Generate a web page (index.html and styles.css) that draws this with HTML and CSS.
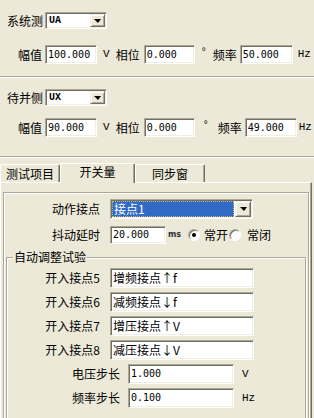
FILE: index.html
```html
<!DOCTYPE html>
<html lang="zh">
<head>
<meta charset="utf-8">
<title>同期</title>
<link rel="stylesheet" href="styles.css">
</head>
<body>
<div class="side side-sys">
  <div class="combo-row">
    <span class="side-label">系统测</span>
    <div class="combo combo-side"><span class="combo-val">UA</span><span class="drop"><i class="tri"></i></span></div>
  </div>
  <div class="val-row">
    <span class="lbl">幅值</span>
    <span class="field f-amp">100.000</span>
    <span class="unit u-v">V</span>
    <span class="lbl l-phase">相位</span>
    <span class="field f-phase">0.000</span>
    <span class="deg">°</span>
    <span class="lbl l-freq">频率</span>
    <span class="field f-freq">50.000</span>
    <span class="unit u-hz">Hz</span>
  </div>
</div>
<div class="sep"></div>
<div class="side side-par">
  <div class="combo-row">
    <span class="side-label">待并侧</span>
    <div class="combo combo-side"><span class="combo-val">UX</span><span class="drop"><i class="tri"></i></span></div>
  </div>
  <div class="val-row">
    <span class="lbl">幅值</span>
    <span class="field f-amp">90.000</span>
    <span class="unit u-v">V</span>
    <span class="lbl l-phase">相位</span>
    <span class="field f-phase">0.000</span>
    <span class="deg deg-2">°</span>
    <span class="lbl l-freq-2">频率</span>
    <span class="field f-freq-2">49.000</span>
    <span class="unit u-hz-2">Hz</span>
  </div>
</div>
<div class="sep"></div>

<div class="tabstrip">
  <div class="tab tab-test">测试项目</div>
  <div class="tab tab-sw active">开关量</div>
  <div class="tab tab-sync">同步窗</div>
</div>
<div class="panel">
  <div class="frame">
    <div class="prow prow-act">
      <span class="plbl">动作接点</span>
      <div class="combo combo-act"><span class="combo-sel">接点1</span><span class="drop drop-act"><i class="tri"></i></span></div>
    </div>
    <div class="prow prow-delay">
      <span class="plbl">抖动延时</span>
      <span class="field f-delay">20.000</span>
      <span class="ms">ms</span>
      <span class="radio on"></span>
      <span class="rtext">常开</span>
      <span class="radio radio-2"></span>
      <span class="rtext rtext-2">常闭</span>
    </div>
    <div class="group">
      <span class="legend">自动调整试验</span>
      <div class="grow">
        <span class="glbl">开入接点5</span>
        <span class="field f-bin">增频接点↑f</span>
      </div>
      <div class="grow">
        <span class="glbl">开入接点6</span>
        <span class="field f-bin">减频接点↓f</span>
      </div>
      <div class="grow">
        <span class="glbl">开入接点7</span>
        <span class="field f-bin">增压接点↑V</span>
      </div>
      <div class="grow">
        <span class="glbl">开入接点8</span>
        <span class="field f-bin">减压接点↓V</span>
      </div>
      <div class="grow">
        <span class="glbl glbl-step">电压步长</span>
        <span class="field f-step">1.000</span>
        <span class="unit u-step">V</span>
      </div>
      <div class="grow">
        <span class="glbl glbl-step">频率步长</span>
        <span class="field f-step">0.100</span>
        <span class="unit u-step">Hz</span>
      </div>
    </div>
  </div>
</div>
</body>
</html>
```

FILE: styles.css
```css
* { box-sizing: border-box; }
html, body { margin: 0; padding: 0; }
body {
  width: 314px;
  height: 418px;
  overflow: hidden;
  background: #ECE9D8;
  color: #000;
  font-family: "Noto Sans CJK SC", "Noto Sans", sans-serif;
  font-size: 12px;
  line-height: 16px;
}

/* ---------- top sections ---------- */
.side-sys { padding-top: 12px; padding-bottom: 12px; }
.side-par { padding-top: 11px; padding-bottom: 19px; }

.combo-row {
  display: flex;
  align-items: center;
  height: 17px;
  padding-left: 7px;
}
.side-label { width: 38px; line-height: 17px; }

.combo {
  display: flex;
  align-items: center;
  background: #fff;
  border: 1px solid;
  border-color: #ACA899 #fff #fff #ACA899;
  box-shadow: inset 1px 1px #716F64, inset -1px -1px #F1EFE2;
  padding: 1px;
}
.combo-side { width: 62px; height: 17px; }
.combo-val {
  flex: 1;
  font-family: "Liberation Mono", monospace;
  font-size: 10px;
  font-weight: bold;
  line-height: 13px;
  padding-left: 2px;
}
.drop {
  width: 15px;
  height: 13px;
  background: #ECE9D8;
  border: 1px solid;
  border-color: #F1EFE2 #716F64 #716F64 #F1EFE2;
  box-shadow: inset 1px 1px #fff, inset -1px -1px #ACA899;
  display: flex;
  align-items: center;
  justify-content: center;
}
.tri {
  display: block;
  width: 0;
  height: 0;
  border-left: 4px solid transparent;
  border-right: 3px solid transparent;
  border-top: 4px solid #000;
}

.val-row {
  display: flex;
  align-items: center;
  height: 19px;
  margin-top: 16px;
  padding-left: 18px;
}
.side-par .val-row { margin-top: 12px; }

.lbl { line-height: 19px; }
.field {
  display: block;
  height: 19px;
  background: #fff;
  border: 1px solid;
  border-color: #ACA899 #fff #fff #ACA899;
  box-shadow: inset 1px 1px #716F64, inset -1px -1px #F1EFE2;
  font-family: "DejaVu Sans Mono", monospace;
  font-size: 10px;
  line-height: 17px;
  padding-left: 2px;
  white-space: nowrap;
  overflow: hidden;
}
.f-amp { margin-left: 3px; width: 52px; }
.unit {
  font-family: "Liberation Mono", monospace;
  font-size: 11px;
  line-height: 19px;
}
.u-v { margin-left: 6px; }
.l-phase { margin-left: 6px; }
.f-phase { margin-left: 4px; width: 51px; }
.deg {
  margin-left: 6px;
  margin-top: 3px;
  width: 6px;
  font-family: "Liberation Mono", monospace;
  font-size: 10px;
  line-height: 10px;
  align-self: flex-start;
}
.deg-2 { margin-left: 8px; }
.l-freq { margin-left: 6px; }
.f-freq { margin-left: 3px; width: 53px; }
.u-hz { margin-left: 5px; }
.l-freq-2 { margin-left: 9px; }
.f-freq-2 { margin-left: 3px; width: 52px; }
.u-hz-2 { margin-left: 2px; }

.sep {
  height: 2px;
  border-top: 1px solid #ACA899;
  border-bottom: 1px solid #fff;
}

/* ---------- tabs ---------- */
.tabstrip {
  display: flex;
  align-items: flex-end;
  height: 19px;
  margin-top: 5px;
}
.tab {
  height: 18px;
  background: #ECE9D8;
  border-top: 1px solid #fff;
  border-left: 1px solid #fff;
  border-right: 1px solid #716F64;
  box-shadow: inset -1px 0 #ACA899;
  border-radius: 2px 2px 0 0;
  line-height: 17px;
  white-space: nowrap;
}
.tab-test { width: 60px; padding-left: 5px; }
.tab-sync { width: 70px; text-align: center; }
.tab.active {
  position: relative;
  z-index: 1;
  width: 75px;
  height: 20px;
  margin-bottom: -1px;
  text-align: center;
  line-height: 15px;
}

.panel {
  width: 312px;
  height: 236px;
  overflow: hidden;
  border-top: 1px solid #fff;
  border-left: 1px solid #fff;
  border-right: 1px solid #716F64;
  box-shadow: inset -1px 0 #ACA899;
  padding-top: 9px;
}

.frame {
  margin: 0 2px;
  width: 306px;
  height: 232px;
  border: 1px solid #ACA899;
  box-shadow: inset 1px 1px #fff, 1px 1px #fff;
}

.prow {
  display: flex;
  align-items: center;
}
.plbl { width: 96px; text-align: right; }
.prow-act { margin-top: 6px; height: 20px; }
.combo-act { margin-left: 10px; width: 143px; height: 20px; }
.combo-sel {
  flex: 1;
  height: 16px;
  margin-right: 1px;
  background: #316AC5;
  color: #fff;
  outline: 1px dotted #C9B878;
  outline-offset: -1px;
  line-height: 16px;
  padding-left: 2px;
}
.drop-act { width: 16px; height: 16px; }

.prow-delay { margin-top: 7px; height: 18px; }
.f-delay { margin-left: 10px; width: 56px; height: 18px; line-height: 16px; }
.ms {
  margin-left: 2px;
  width: 12px;
  font-family: "DejaVu Sans", sans-serif;
  font-size: 8px;
  font-weight: bold;
  color: #333;
}
.radio {
  display: flex;
  align-items: center;
  justify-content: center;
  margin-left: 8px;
  width: 12px;
  height: 12px;
  border-radius: 50%;
  background: #fff;
  border: 1px solid;
  border-color: #ACA899 #fff #fff #ACA899;
  box-shadow: inset 1px 1px #716F64;
}
.radio.on::after {
  content: "";
  width: 4px;
  height: 4px;
  border-radius: 50%;
  background: #000;
}
.radio-2 { margin-left: 1px; }
.rtext { margin-left: 4px; }
.rtext-2 { margin-left: 6px; }

.group {
  position: relative;
  margin: 13px 2px 0;
  height: 170px;
  border: 1px solid #ACA899;
  box-shadow: inset 1px 1px #fff, 1px 1px #fff;
  padding-top: 10px;
  display: flex;
  flex-direction: column;
  gap: 4px;
}
.legend {
  position: absolute;
  left: 6px;
  top: -9px;
  padding: 0 1px;
  background: #ECE9D8;
  line-height: 16px;
}
.grow {
  display: flex;
  align-items: center;
  height: 20px;
  flex: none;
}
.glbl { width: 93px; text-align: right; }
.glbl-step { width: 113px; }
.f-bin {
  margin-left: 10px;
  width: 144px;
  height: 20px;
  font-family: "Noto Sans CJK SC", sans-serif;
  font-size: 12px;
  line-height: 18px;
}
.f-step { margin-left: 8px; width: 106px; height: 20px; line-height: 18px; }
.u-step { margin-left: 8px; line-height: 20px; }
```
